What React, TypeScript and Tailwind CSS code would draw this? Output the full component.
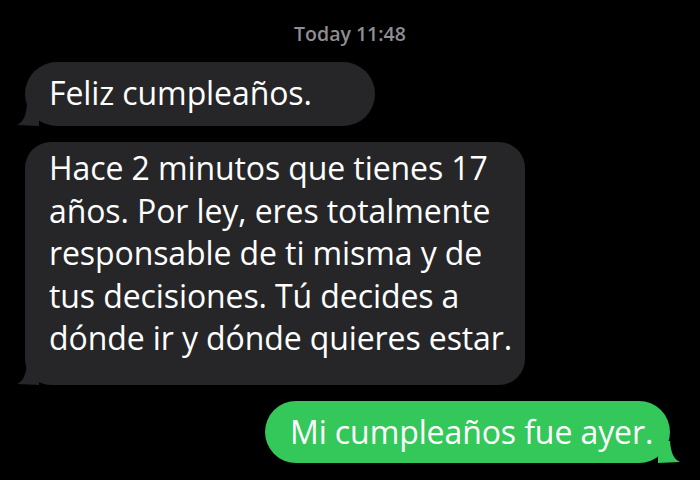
import React from 'react';

const LeftTail = ({ color }: { color: string }) => (
    <svg className="absolute -left-[8px] bottom-0" width="22" height="22" viewBox="0 0 22 22">
        <path d="M22 0 L22 22 L0 21 C6 18 9 13 10 0 Z" fill={color} />
    </svg>
);

const RightTail = ({ color }: { color: string }) => (
    <svg className="absolute -right-[10px] bottom-0" width="22" height="22" viewBox="0 0 22 22">
        <path d="M0 0 L0 22 L22 21 C16 18 13 13 12 0 Z" fill={color} />
    </svg>
);

export default function App() {
    const lines = [
        'Hace 2 minutos que tienes 17',
        'años. Por ley, eres totalmente',
        'responsable de ti misma y de',
        'tus decisiones. Tú decides a',
        'dónde ir y dónde quieres estar.',
    ];

    return (
        <div className="w-[700px] h-[480px] bg-black overflow-hidden font-['Open_Sans','Noto_Sans',sans-serif] flex flex-col">
            <div className="pt-[21px] text-center text-[19.5px] leading-[26px] font-semibold text-[#8e8e93]">
                Today 11:48
            </div>

            <div className="flex flex-col px-[25px] mt-[15px]">
                <div className="relative w-[350px] h-[64px] rounded-[32px] bg-[#262628] pl-[24px] pb-[3px] flex items-center">
                    <LeftTail color="#262628" />
                    <span className="relative text-[32px] tracking-[-0.1px] text-white">Feliz cumpleaños.</span>
                </div>

                <div className="relative mt-[16px] w-[500px] rounded-[26px] bg-[#262628] pl-[24px] pt-[5px] pb-[25px]">
                    <LeftTail color="#262628" />
                    <div className="relative text-[32px] tracking-[-0.1px] leading-[42.5px] text-white">
                        {lines.map((l) => (
                            <div key={l} className="whitespace-nowrap">{l}</div>
                        ))}
                    </div>
                </div>

                <div className="relative self-end mr-[5px] mt-[16px] w-[405px] h-[62px] rounded-[31px] bg-[#34c759] pl-[25px] flex items-center">
                    <RightTail color="#34c759" />
                    <span className="relative text-[32px] tracking-[-0.1px] text-white">Mi cumpleaños fue ayer.</span>
                </div>
            </div>
        </div>
    );
}
